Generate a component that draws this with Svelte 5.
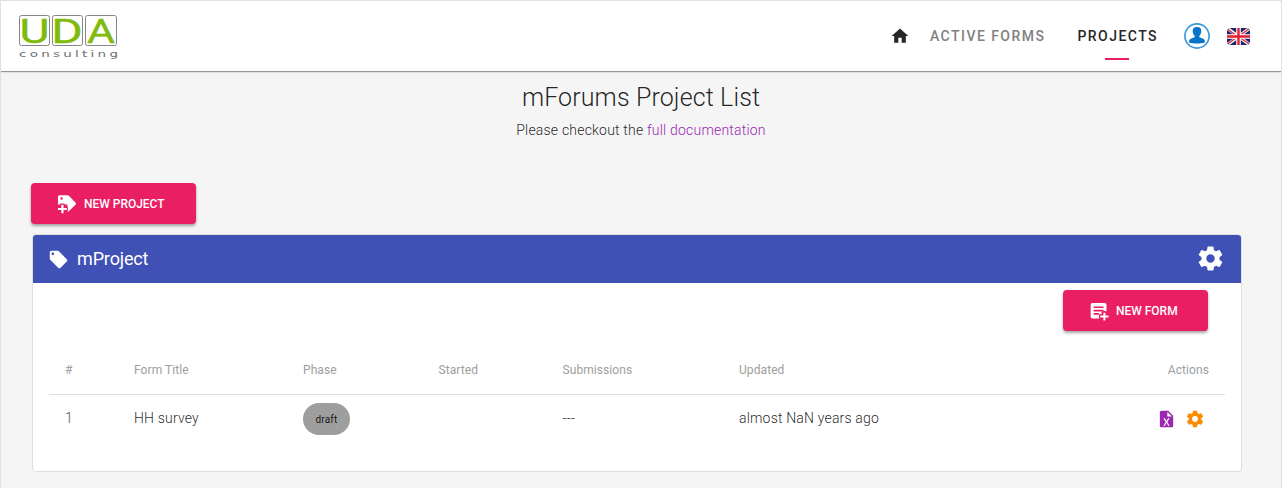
<script>
  const headings = ['#', 'Form Title', 'Phase', 'Started', 'Submissions', 'Updated', 'Actions'];
  const forms = [{ id: 1, title: 'HH survey', phase: 'draft', started: '', submissions: '---', updated: 'almost NaN years ago' }];
  const gear = 'M12,15.5A3.5,3.5 0 0,1 8.5,12A3.5,3.5 0 0,1 12,8.5A3.5,3.5 0 0,1 15.5,12A3.5,3.5 0 0,1 12,15.5M19.43,12.97C19.47,12.65 19.5,12.33 19.5,12C19.5,11.67 19.47,11.34 19.43,11L21.54,9.37C21.73,9.22 21.78,8.95 21.66,8.73L19.66,5.27C19.54,5.05 19.27,4.96 19.05,5.05L16.56,6.05C16.04,5.66 15.5,5.32 14.87,5.07L14.5,2.42C14.46,2.18 14.25,2 14,2H10C9.75,2 9.54,2.18 9.5,2.42L9.13,5.07C8.5,5.32 7.96,5.66 7.44,6.05L4.95,5.05C4.73,4.96 4.46,5.05 4.34,5.27L2.34,8.73C2.21,8.95 2.27,9.22 2.46,9.37L4.57,11C4.53,11.34 4.5,11.67 4.5,12C4.5,12.33 4.53,12.65 4.57,12.97L2.46,14.63C2.27,14.78 2.21,15.05 2.34,15.27L4.34,18.73C4.46,18.95 4.73,19.03 4.95,18.95L7.44,17.94C7.96,18.34 8.5,18.68 9.13,18.93L9.5,21.58C9.54,21.82 9.75,22 10,22H14C14.25,22 14.46,21.82 14.5,21.58L14.87,18.93C15.5,18.67 16.04,18.34 16.56,17.94L19.05,18.95C19.27,19.03 19.54,18.95 19.66,18.73L21.66,15.27C21.78,15.05 21.73,14.78 21.54,14.63L19.43,12.97Z';
</script>

<div class="page">
  <header>
    <svg class="logo" width="100" height="48" viewBox="0 0 100 48">
      <g fill="#fff" stroke="#85858a" stroke-width="1">
        <rect x="1.5" y="1.5" width="30" height="30" rx="2" />
        <rect x="34.5" y="1.5" width="30" height="30" rx="2" />
        <rect x="67.5" y="1.5" width="31" height="30" rx="2" />
      </g>
      <g class="mark">
        <text x="1.5" y="28.800" textLength="30" lengthAdjust="spacingAndGlyphs">U</text>
        <text x="33.200" y="28.800" textLength="31.500" lengthAdjust="spacingAndGlyphs">D</text>
        <text x="69" y="28.800" textLength="28" lengthAdjust="spacingAndGlyphs">A</text>
      </g>
      <text class="sub" transform="translate(1 42.5) scale(1.5 1)" x="0" y="0" textLength="66">consulting</text>
    </svg>
    <nav>
      <svg class="home" width="20" height="20" viewBox="0 0 24 24" fill="#272727"><path d="M10,20V14H14V20H19V12H22L12,3L2,12H5V20H10Z" /></svg>
      <span class="link">ACTIVE FORMS</span>
      <span class="link active">PROJECTS</span>
      <svg class="user" width="26" height="26" viewBox="0 0 26 26">
        <circle cx="13" cy="13" r="12.1" fill="#fff" stroke="#3498db" stroke-width="1.6" />
        <path fill="#0874c9" d="M13 4c-3.200 0-4.600 1.900-4.300 4.700.2 1.700 1 3.200 2 4.300v1.300c-2 .9-5 1.200-5.500 3.100-.3 1.200-.1 2.200.5 2.400 3.900.9 10.700.9 14.600 0 .6-.2.8-1.200.5-2.400-.5-1.900-3.500-2.200-5.500-3.100v-1.300c1-1.100 1.800-2.600 2-4.300.3-2.800-1.100-4.700-4.300-4.700z" />
      </svg>
      <svg class="flag" width="23" height="17" viewBox="0 0 23 17">
        <defs><clipPath id="flag-edge"><rect width="23" height="17" rx="4" /></clipPath></defs>
        <g clip-path="url(#flag-edge)">
          <rect width="23" height="17" fill="#20256f" />
          <path d="M0 0L23 17M23 0L0 17" stroke="#f4f2f8" stroke-width="3.200" />
          <path d="M0 .7L10 8M23 .2L12 8M0 16.500L10 9M23 16.500L12 9" stroke="#dc2638" stroke-width="1.200" />
          <path d="M11.500 0V17M0 8.500H23" stroke="#fff" stroke-width="4.600" />
          <path d="M11.500 0V17M0 8.500H23" stroke="#e0202e" stroke-width="2.400" />
        </g>
      </svg>
    </nav>
  </header>

  <main>
    <h1>mForums Project List</h1>
    <p class="intro">Please checkout the <a href="#docs">full documentation</a></p>

    <button class="btn project">
      <svg width="20" height="20" viewBox="0 0 24 24"><path fill="#fff" fill-rule="evenodd" d="M3 1.500H12.500Q13.500 1.500 14.200 2.200L22.400 10.400Q23.500 11.500 22.400 12.600L14.500 20.500Q13.500 21.500 12.500 21.500V12.500H1.200V3.500Q1.200 1.500 3 1.500ZM5.500 4A1.500 1.500 0 1 0 5.500 7A1.500 1.500 0 1 0 5.500 4Z" /><path d="M6.500 11.500V24M0 18H13" stroke="#e91e63" stroke-width="5.500" /><path d="M6.500 13V23M1.200 18H11.800" stroke="#fff" stroke-width="2.600" /></svg>
      <span>NEW PROJECT</span>
    </button>

    <section class="card">
      <div class="title">
        <svg width="21" height="21" viewBox="0 0 24 24" fill="#fff"><path d="M5.500,7A1.500,1.500 0 0,1 4,5.500A1.500,1.500 0 0,1 5.500,4A1.500,1.500 0 0,1 7,5.500A1.500,1.500 0 0,1 5.500,7M21.410,11.580L12.410,2.580C12.050,2.220 11.550,2 11,2H4C2.890,2 2,2.890 2,4V11C2,11.550 2.220,12.050 2.590,12.410L11.580,21.410C11.950,21.770 12.450,22 13,22C13.550,22 14.050,21.770 14.410,21.410L21.410,14.410C21.780,14.050 22,13.550 22,13C22,12.440 21.770,11.940 21.410,11.580Z" /></svg>
        <h2>mProject</h2>
        <svg class="settings" width="29" height="29" viewBox="0 0 24 24" fill="#fff"><path d={gear} /></svg>
      </div>
      <div class="toolbar">
        <button class="btn form">
          <svg width="20" height="20" viewBox="0 0 24 24"><path fill="#fff" d="M4 2.500H19Q21 2.500 21 4.500V13H15V16H12.500V21H4Q2 21 2 19V4.500Q2 2.500 4 2.500Z" /><path d="M5.500 7.500H17.500M5.500 11.500H17.500M5.500 15.500H12" stroke="#e91e63" stroke-width="2" /><path d="M18.500 12V24M12 18.500H24" stroke="#e91e63" stroke-width="4.500" /><path fill="#fff" d="M17.300 14H19.700V17.300H23.500V19.700H19.700V23.500H17.300V19.700H13.500V17.300H17.300Z" /></svg>
          <span>NEW FORM</span>
        </button>
      </div>
      <div class="table">
        <div class="row head">
          {#each headings as heading}<span>{heading}</span>{/each}
        </div>
        {#each forms as form}
          <div class="row">
            <span class="number">{form.id}</span>
            <span>{form.title}</span>
            <span><b class="chip">{form.phase}</b></span>
            <span>{form.started}</span>
            <span>{form.submissions}</span>
            <span>{form.updated}</span>
            <span class="actions">
              <svg width="21" height="20" viewBox="0 0 24 24" fill="#9c27b0"><path d="M14,2H6C4.890,2 4,2.900 4,4V20C4,21.110 4.890,22 6,22H18C19.110,22 20,21.110 20,20V8L14,2M15.800,20H14L12,16.600L10,20H8.200L11.100,15.500L8.200,11H10L12,14.400L14,11H15.800L12.900,15.500L15.800,20M13,9V3.500L18.500,9H13Z" /></svg>
              <svg width="20" height="20" viewBox="0 0 24 24" fill="#fb8c00"><path d={gear} /></svg>
            </span>
          </div>
        {/each}
      </div>
    </section>
  </main>
</div>

<style>
  :global(body) { margin: 0; background: #f5f5f5; }
  .page { box-sizing: border-box; height: 488px; overflow: hidden; border: solid #e0e0e0; border-width: 1px 1px 0; background: #f5f5f5; font-family: Roboto, sans-serif; color: rgba(0, 0, 0, .87); }
  header { box-sizing: border-box; height: 71px; display: flex; justify-content: space-between; background: #fff; border-bottom: 1px solid #969696; box-shadow: 0 1px 1px #e3e3e3; padding-left: 17px; }
  .logo { margin-top: 13px; overflow: visible; }
  .mark { font: 400 34px Roboto, sans-serif; fill: #80ba0b; stroke: #80ba0b; stroke-width: .4px; }
  .sub { font: 9px 'DejaVu Sans', sans-serif; fill: #707070; }
  nav { display: flex; align-items: center; height: 70px; padding-right: 31px; }
  .home { margin-right: 20px; }
  .link { font-size: 14px; font-weight: 500; letter-spacing: 1.46px; line-height: 20px; color: #808080; }
  .active { position: relative; margin-left: 32px; color: #272727; }
  .active::after { content: ''; position: absolute; left: 28px; top: 32px; width: 24px; height: 2px; background: #e91e63; }
  .user { margin-left: 26px; }
  .flag { margin-left: 17px; }
  h1 { margin: 9px 0 0; text-align: center; font-size: 25px; font-weight: 300; line-height: 34px; letter-spacing: .12px; }
  .intro { margin: 5px 0 0; text-align: center; font-size: 14px; font-weight: 300; line-height: 20px; letter-spacing: .2px; }
  a { color: #9c27b0; text-decoration: none; }
  main { padding: 0 39px 0 30px; }
  h1, .intro { padding-left: 9px; }
  .btn { box-sizing: border-box; display: flex; align-items: center; gap: 7px; height: 41px; padding: 0 0 0 26px; border: 0; border-radius: 4px; background: #e91e63; color: #fff; font: 500 12px Roboto, sans-serif; letter-spacing: -.02px; box-shadow: 0 2px 3px rgba(0, 0, 0, .35); }
  .project { width: 165px; margin-top: 43px; }
  .form { width: 145px; }
  .card { box-sizing: border-box; height: 238px; margin: 10px 0 0 1px; border: 1px solid #dedede; border-radius: 4px; overflow: hidden; background: #fff; }
  .title { display: flex; align-items: center; height: 48px; padding: 0 16px 0 15px; background: #3f51b5; color: #fff; }
  .title h2 { margin: 0 auto 2px 8px; font-size: 18px; font-weight: 400; letter-spacing: -.14px; }
  .settings { margin-bottom: 1px; }
  .toolbar { display: flex; justify-content: flex-end; padding: 7px 33px 0 0; }
  .table { margin: 15px 16px 0; }
  .row { box-sizing: border-box; display: grid; grid-template-columns: 69px 169px 135.500px 124px 176.500px 1fr 60px; align-items: center; height: 48px; padding: 0 16px; font-size: 14px; font-weight: 300; letter-spacing: .18px; }
  .row:not(.head) > span:not(:has(.chip)):not(.actions) { padding-bottom: 2px; }
  .head { height: 49px; border-bottom: 1px solid #ddd; color: #9e9e9e; font-size: 12px; font-weight: 400; letter-spacing: .08px; }
  .number { color: #555; }
  .row > :last-child { text-align: right; }
  .chip { display: inline-flex; align-items: center; justify-content: center; width: 47px; height: 32px; border-radius: 16px; background: #9e9e9e; font-size: 10px; font-weight: 400; }
  .actions { display: flex; justify-content: flex-end; gap: 8px; padding: 0 4px 1px 0; }
</style>
